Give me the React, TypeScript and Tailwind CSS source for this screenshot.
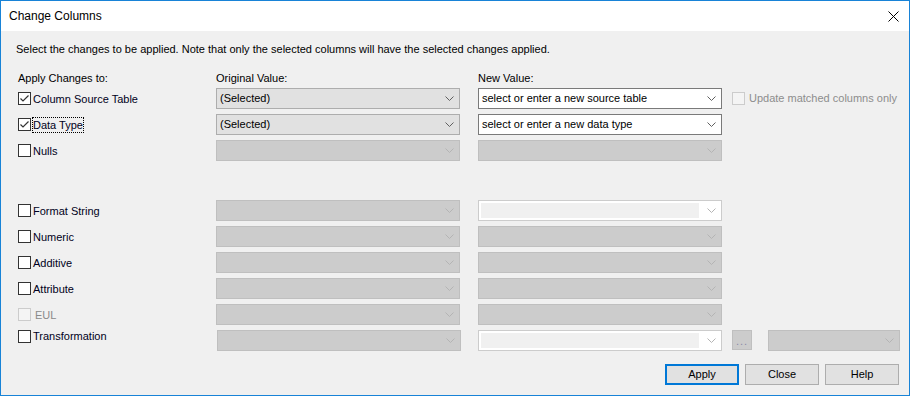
import React from "react";

type ComboKind = "enabled" | "edit" | "disabled" | "editDisabled";

const Chevron = ({ light }: { light?: boolean }) => (
  <svg width="9" height="5" viewBox="0 0 9 5" className="shrink-0">
    <polyline
      points="0.5,0.5 4.5,4.5 8.5,0.5"
      fill="none"
      stroke={light ? "#b4b4b4" : "#606060"}
      strokeWidth="1"
    />
  </svg>
);

const Combo = ({
  kind,
  text,
  className = "w-[244px]",
}: {
  kind: ComboKind;
  text?: string;
  className?: string;
}) => {
  const look = {
    enabled: "bg-[#e1e1e1] border-[#adadad] text-black",
    edit: "bg-white border-[#7a7a7a] text-[#000]",
    disabled: "bg-[#cccccc] border-[#bfbfbf]",
    editDisabled: "bg-white border-[#cccccc]",
  }[kind];
  const light = kind === "disabled" || kind === "editDisabled";
  return (
    <div className={`h-[21px] border flex items-center pr-[5px] ${look} ${className}`}>
      {kind === "editDisabled" ? (
        <div className="flex-1 h-[15px] ml-[2px] mr-[8px] bg-[#f0f0f0]" />
      ) : (
        <span className="flex-1 pl-[3px] leading-none truncate">{text}</span>
      )}
      <Chevron light={light} />
    </div>
  );
};

const Check = ({ checked, disabled }: { checked?: boolean; disabled?: boolean }) => (
  <span
    className={`w-[13px] h-[13px] border flex items-center justify-center shrink-0 ${
      disabled ? "border-[#cccccc] bg-[#f4f4f4]" : "border-[#333333] bg-white"
    }`}
  >
    {checked && (
      <svg width="11" height="11" viewBox="0 0 11 11">
        <polyline points="1.5,5.5 4,8 9.5,2.5" fill="none" stroke="#333333" strokeWidth="1.2" />
      </svg>
    )}
  </span>
);

const CheckLabel = ({
  label,
  checked,
  disabled,
  focused,
}: {
  label: string;
  checked?: boolean;
  disabled?: boolean;
  focused?: boolean;
}) => (
  <div className="w-[200px] flex items-center pl-[2px]">
    <Check checked={checked} disabled={disabled} />
    <span
      className={`leading-[14px] ${disabled ? "text-[#8a8a8a] ml-[4px]" : "text-[#000020] ml-[2px]"} ${
        focused ? "outline outline-1 outline-dotted outline-black" : ""
      }`}
    >
      {label}
    </span>
  </div>
);

const Row = ({ children }: { children: React.ReactNode }) => (
  <div className="flex items-center h-[21px]">{children}</div>
);

export default function App() {
  return (
    <div
      className="w-[910px] h-[396px] border border-[#1883d7] bg-[#f0f0f0] flex flex-col text-[11px] text-black select-none"
      style={{ fontFamily: '"Liberation Sans", Arial, sans-serif' }}
    >
      {/* title bar */}
      <div className="h-[30px] bg-white flex items-center justify-between pl-[8px] pr-[10px] shrink-0">
        <span className="text-[12px]">Change Columns</span>
        <svg width="11" height="11" viewBox="0 0 11 11">
          <path d="M0.5 0.5 L10.5 10.5 M10.5 0.5 L0.5 10.5" stroke="#000" strokeWidth="1" />
        </svg>
      </div>

      <div className="flex flex-col pl-[15px]">
        <p className="mt-[11px] h-[14px] leading-[14px]">
          Select the changes to be applied. Note that only the selected columns will have the selected changes applied.
        </p>

        <div className="flex mt-[15px] h-[14px] leading-[14px] pl-[2px]">
          <span className="w-[198px]">Apply Changes to:</span>
          <span className="w-[262px]">Original Value:</span>
          <span>New Value:</span>
        </div>

        <div className="flex flex-col gap-[5px] mt-[3px]">
          <Row>
            <CheckLabel label="Column Source Table" checked />
            <Combo kind="enabled" text="(Selected)" />
            <div className="w-[18px]" />
            <Combo kind="edit" text="select or enter a new source table" />
            <div className="flex items-center ml-[10px] whitespace-nowrap">
              <Check disabled />
              <span className="ml-[4px] text-[#8d8d8d]">Update matched columns only</span>
            </div>
          </Row>
          <Row>
            <CheckLabel label="Data Type" checked focused />
            <Combo kind="enabled" text="(Selected)" />
            <div className="w-[18px]" />
            <Combo kind="edit" text="select or enter a new data type" />
          </Row>
          <Row>
            <CheckLabel label="Nulls" />
            <Combo kind="disabled" />
            <div className="w-[18px]" />
            <Combo kind="disabled" />
          </Row>
        </div>

        <div className="flex flex-col gap-[5px] mt-[39px]">
          <Row>
            <CheckLabel label="Format String" />
            <Combo kind="disabled" />
            <div className="w-[18px]" />
            <Combo kind="editDisabled" />
          </Row>
          <Row>
            <CheckLabel label="Numeric" />
            <Combo kind="disabled" />
            <div className="w-[18px]" />
            <Combo kind="disabled" />
          </Row>
          <Row>
            <CheckLabel label="Additive" />
            <Combo kind="disabled" />
            <div className="w-[18px]" />
            <Combo kind="disabled" />
          </Row>
          <Row>
            <CheckLabel label="Attribute" />
            <Combo kind="disabled" />
            <div className="w-[18px]" />
            <Combo kind="disabled" />
          </Row>
          <Row>
            <CheckLabel label="EUL" disabled />
            <Combo kind="disabled" />
            <div className="w-[18px]" />
            <Combo kind="disabled" />
          </Row>
          <div className="flex items-start h-[21px]">
            <div className="-mt-[1px] flex">
              <CheckLabel label="Transformation" />
            </div>
            <Combo kind="disabled" className="w-[244px] ml-px" />
            <div className="w-[17px]" />
            <Combo kind="editDisabled" />
            <div className="ml-[10px] w-[20px] h-[20px] border border-[#bfbfbf] bg-[#cccccc] flex items-end justify-center pb-[2px] text-[#8a8aa8] leading-none">
              <span className="text-[11px] tracking-[1px]">...</span>
            </div>
            <div className="w-[16px]" />
            <Combo kind="disabled" className="w-[132px]" />
          </div>
        </div>

        <div className="flex justify-end gap-[6px] pr-[10px] mt-[13px]">
          <button className="w-[74px] h-[21px] border-2 border-[#0078d7] bg-[#e1e1e1] leading-none">Apply</button>
          <button className="w-[74px] h-[21px] border border-[#adadad] bg-[#e1e1e1] leading-none">Close</button>
          <button className="w-[74px] h-[21px] border border-[#adadad] bg-[#e1e1e1] leading-none">Help</button>
        </div>
      </div>
    </div>
  );
}
